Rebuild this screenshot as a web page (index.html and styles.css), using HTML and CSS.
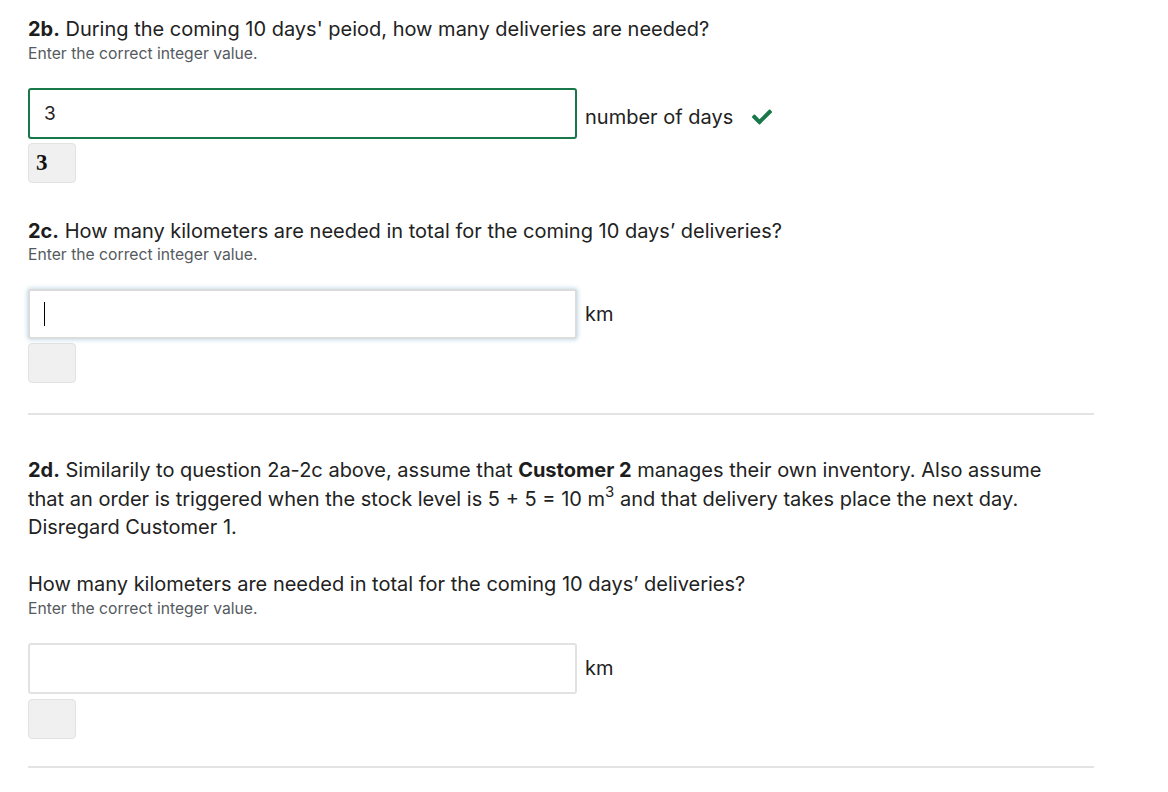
FILE: index.html
```html
<!DOCTYPE html>
<html lang="en">
<head>
<meta charset="utf-8">
<title>Questions</title>
<link rel="stylesheet" href="styles.css">
</head>
<body>
<main class="page">
  <section class="question">
    <p class="q-title"><strong>2b.</strong> During the coming 10 days' peiod, how many deliveries are needed?</p>
    <p class="q-hint">Enter the correct integer value.</p>
    <div class="answer-row">
      <div class="field field-correct">3</div>
      <div class="unit-group">
        <span class="unit">number of days</span>
        <svg class="check" viewBox="0 60 512 392" width="20" height="16" aria-hidden="true"><path fill="#19784a" d="M173.9 439.4l-166.4-166.4c-10-10-10-26.2 0-36.2l36.2-36.2c10-10 26.2-10 36.2 0L192 312.7 432.1 72.6c10-10 26.2-10 36.2 0l36.2 36.2c10 10 10 26.2 0 36.2l-294.4 294.4c-10 10-26.2 10-36.2 0z"/></svg>
      </div>
    </div>
    <div class="preview"><span class="math">3</span></div>
  </section>

  <section class="question q-gap">
    <p class="q-title"><strong>2c.</strong> How many kilometers are needed in total for the coming 10 days’ deliveries?</p>
    <p class="q-hint">Enter the correct integer value.</p>
    <div class="answer-row">
      <div class="field field-focus"><span class="caret"></span></div>
      <span class="unit">km</span>
    </div>
    <div class="preview"></div>
  </section>

  <hr class="divider">

  <section class="question q-after-rule">
    <p class="q-body"><strong>2d.</strong> Similarily to question 2a-2c above, assume that <strong>Customer 2</strong> manages their own inventory. Also assume that an order is triggered when the stock level is 5 + 5 = 10 m<sup>3</sup> and that delivery takes place the next day. Disregard Customer 1.</p>
    <p class="q-title q-sub">How many kilometers are needed in total for the coming 10 days’ deliveries?</p>
    <p class="q-hint">Enter the correct integer value.</p>
    <div class="answer-row">
      <div class="field"></div>
      <span class="unit">km</span>
    </div>
    <div class="preview preview-last"></div>
  </section>

  <hr class="divider divider-last">
</main>
</body>
</html>
```

FILE: styles.css
```css
html, body {
  margin: 0;
  padding: 0;
  background: #ffffff;
}

body {
  font-family: "Inter", "Noto Sans", "Liberation Sans", sans-serif;
  color: #202124;
}

.page {
  width: 1066px;
  padding: 15px 0 0 28px;
}

.question p {
  margin: 0;
}

.q-title,
.q-body {
  font-size: 20px;
  line-height: 28.5px;
  color: #222;
}

.q-body {
  max-width: 1040px;
}

.q-title strong,
.q-body strong {
  font-weight: 700;
  color: #1d1d1d;
}

.q-body sup {
  font-size: 15px;
  line-height: 0;
  vertical-align: 0;
  position: relative;
  top: -9px;
}

.q-hint {
  font-size: 15.7px;
  line-height: 20px;
  color: #555a60;
}

.q-gap {
  margin-top: 34px;
}

.q-after-rule {
  margin-top: 41px;
}

.q-sub {
  margin-top: 28.5px !important;
}

.answer-row {
  display: flex;
  align-items: center;
  margin-top: 24px;
}

.field {
  box-sizing: border-box;
  width: 549px;
  height: 51px;
  border: 2px solid #e2e2e2;
  border-radius: 3px;
  background: #fff;
  padding: 0 14px;
  display: flex;
  align-items: center;
  font-size: 19px;
  color: #222;
}

.field-correct {
  border-color: #19784a;
}

.field-focus {
  height: 50px;
  border-color: #dcdcdc;
  box-shadow: 0 0 4px 1px rgba(150, 190, 215, 0.55);
}

.caret {
  display: block;
  width: 1px;
  height: 24px;
  background: #000;
}

.unit-group {
  display: flex;
  align-items: center;
  margin-top: 8px;
}

.unit {
  margin-left: 8px;
  font-size: 20px;
  color: #222;
}

.check {
  margin-left: 19px;
  display: block;
}

.preview {
  box-sizing: border-box;
  width: 48px;
  height: 40px;
  margin-top: 4px;
  background: #f0f0f0;
  border: 1px solid #e2e2e2;
  border-radius: 4px;
  display: flex;
  align-items: center;
  padding-left: 7px;
}

.preview-last {
  margin-top: 5px;
}

.math {
  font-family: "Liberation Serif", "DejaVu Serif", serif;
  font-size: 23px;
  font-weight: 700;
  color: #111;
}

.divider {
  border: 0;
  border-top: 2px solid #e3e3e3;
  margin: 30px 0 0 0;
  width: 1066px;
}

.divider-last {
  margin-top: 27px;
}
```
